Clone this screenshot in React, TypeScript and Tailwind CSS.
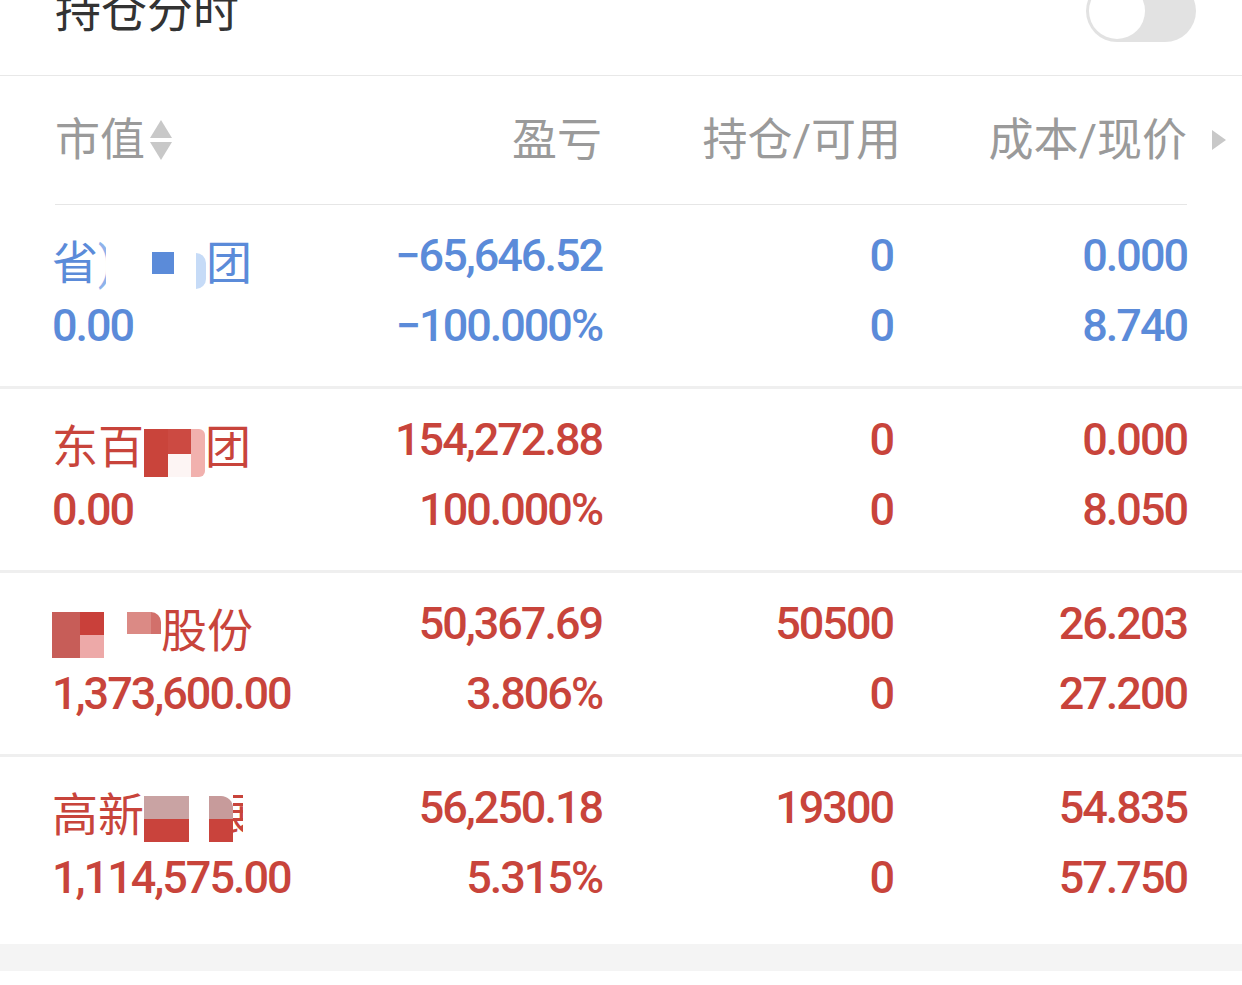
import type { ReactNode } from "react";

const BLUE = "text-[#5b8bd9]";
const RED = "text-[#c8443b]";

type Row = {
  tone: "up" | "down";
  name: ReactNode;
  value: string;
  pnl: string;
  pct: string;
  hold: string;
  avail: string;
  cost: string;
  price: string;
};

function Block({ className }: { className: string }) {
  return <span className={`inline-block ${className}`} />;
}

const rows: Row[] = [
  {
    tone: "down",
    name: (
      <>
        <span>省</span>
        <span className="inline-block w-[8px] overflow-hidden text-[#8fb2ea]">)</span>
        <span className="inline-block w-[46px]" />
        <Block className="h-[22px] w-[22px] bg-[#5b8bd9]" />
        <span className="inline-block w-[22px]" />
        <Block className="h-[36px] w-[10px] translate-y-[8px] rounded-r-full bg-[#c6dbf7]" />
        <span>团</span>
      </>
    ),
    value: "0.00",
    pnl: "−65,646.52",
    pct: "−100.000%",
    hold: "0",
    avail: "0",
    cost: "0.000",
    price: "8.740",
  },
  {
    tone: "up",
    name: (
      <>
        <span>东百</span>
        <span className="inline-flex h-[48px] translate-y-[6px]">
          <Block className="h-[48px] w-[24px] bg-[#c9443b]" />
          <span className="inline-flex flex-col">
            <Block className="h-[25px] w-[23px] bg-[#cc4a42]" />
            <Block className="h-[23px] w-[23px] bg-[#fdf5f4]" />
          </span>
          <Block className="h-[48px] w-[14px] rounded-r-[6px] bg-[#f1b1ae]" />
        </span>
        <span>团</span>
      </>
    ),
    value: "0.00",
    pnl: "154,272.88",
    pct: "100.000%",
    hold: "0",
    avail: "0",
    cost: "0.000",
    price: "8.050",
  },
  {
    tone: "up",
    name: (
      <>
        <span className="inline-flex h-[46px] translate-y-[4px]">
          <Block className="h-[46px] w-[28px] bg-[#c75d58]" />
          <span className="inline-flex flex-col">
            <Block className="h-[23px] w-[24px] bg-[#c9403a]" />
            <Block className="h-[23px] w-[24px] bg-[#eda9a8]" />
          </span>
        </span>
        <span className="inline-block w-[23px]" />
        <span className="inline-flex h-[46px] translate-y-[4px] items-start">
          <Block className="h-[22px] w-[24px] bg-[#db8a85]" />
          <Block className="h-[22px] w-[10px] rounded-tr-[20px] bg-[#d2706b]" />
        </span>
        <span>股份</span>
      </>
    ),
    value: "1,373,600.00",
    pnl: "50,367.69",
    pct: "3.806%",
    hold: "50500",
    avail: "0",
    cost: "26.203",
    price: "27.200",
  },
  {
    tone: "up",
    name: (
      <>
        <span>高新</span>
        <span className="inline-flex h-[46px] translate-y-[4px] flex-col">
          <Block className="h-[23px] w-[45px] bg-[#c9a3a3]" />
          <Block className="h-[23px] w-[45px] bg-[#c9433c]" />
        </span>
        <span className="inline-block w-[20px]" />
        <span className="inline-flex h-[46px] translate-y-[4px] flex-col">
          <Block className="h-[23px] w-[24px] rounded-tr-[12px] bg-[#c79b9b]" />
          <Block className="h-[23px] w-[24px] bg-[#c9433c]" />
        </span>
        <span className="inline-block w-[10px] overflow-hidden">
          <span className="inline-block -translate-x-[24px]">展</span>
        </span>
      </>
    ),
    value: "1,114,575.00",
    pnl: "56,250.18",
    pct: "5.315%",
    hold: "19300",
    avail: "0",
    cost: "54.835",
    price: "57.750",
  },
];

function SortIcon() {
  return (
    <svg width="24" height="42" viewBox="0 0 24 42" className="ml-[4px]">
      <path d="M12 1 L23 19 L1 19 Z" fill="#c8c8c8" />
      <path d="M1 23 L23 23 L12 41 Z" fill="#c8c8c8" />
    </svg>
  );
}

export default function App() {
  return (
    <div
      className="h-[985px] w-[1242px] overflow-hidden bg-white"
      style={{ fontFamily: "Roboto, 'Noto Sans CJK SC', sans-serif" }}
    >
      <div className="-mt-[53px] flex h-[128px] items-center justify-between pl-[55px] pr-[46px]">
        <span className="text-[46px] leading-none text-[#333333]">持仓分时</span>
        <div className="flex h-[62px] w-[110px] items-center rounded-full bg-[#e2e2e2] px-[3px]">
          <div className="h-[56px] w-[56px] rounded-full bg-white" />
        </div>
      </div>

      <div className="border-t border-[#e8e8e8]">
        <div className="flex h-[128px] items-center text-[45px] leading-none text-[#9a9a9a]">
          <div className="flex w-[357px] items-center pl-[55px]">
            <span>市值</span>
            <SortIcon />
          </div>
          <div className="w-[245px] text-right">盈亏</div>
          <div className="w-[299px] text-right">持仓/可用</div>
          <div className="w-[286px] text-right">成本/现价</div>
          <div className="flex w-[55px] justify-center pl-[8px]">
            <svg width="16" height="22" viewBox="0 0 16 22">
              <path d="M1 1 L15 11 L1 21 Z" fill="#c8c8c8" />
            </svg>
          </div>
        </div>
        <div className="mx-[55px] h-px bg-[#e6e6e6]" />
      </div>

      {rows.map((row, i) => (
        <div key={i}>
          <div
            className={`grid grid-cols-[310px_240px_291px_294px] pl-[52px] pr-[55px] pt-[16px] ${
              i === rows.length - 1 ? "pb-[31px]" : "pb-[25px]"
            } text-[45px] font-medium leading-[70px] tracking-[-0.045em] ${row.tone === "down" ? BLUE : RED}`}
          >
            <div className="flex flex-col">
              <div className="flex h-[70px] items-center whitespace-nowrap pt-[14px] text-[46px] font-normal leading-[56px] tracking-normal">
                {row.name}
              </div>
              <div>{row.value}</div>
            </div>
            <div className="flex flex-col text-right">
              <div>{row.pnl}</div>
              <div>{row.pct}</div>
            </div>
            <div className="flex flex-col text-right">
              <div>{row.hold}</div>
              <div>{row.avail}</div>
            </div>
            <div className="flex flex-col text-right">
              <div>{row.cost}</div>
              <div>{row.price}</div>
            </div>
          </div>
          {i < rows.length - 1 ? <div className="h-[3px] bg-[#efefef]" /> : null}
        </div>
      ))}

      <div className="h-[27px] bg-[#f4f4f4]" />
      <div className="h-[20px] bg-white" />
    </div>
  );
}
